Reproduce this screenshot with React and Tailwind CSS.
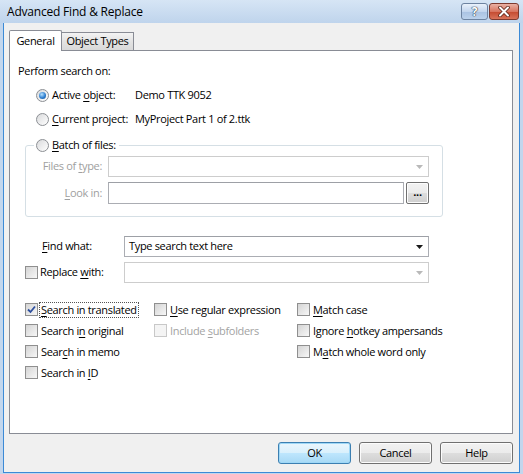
import React from "react";

const UI = "font-['Open_Sans','Noto_Sans',sans-serif] text-[11px] tracking-[-0.33px]";

function K({ children }) {
  return <u className="underline underline-offset-[2px] decoration-1">{children}</u>;
}

function Radio({ checked }) {
  return (
    <span className="w-[13px] h-[13px] shrink-0 rounded-full border border-[#8c8f94] bg-[linear-gradient(135deg,#d9dadc,#ffffff)] flex items-center justify-center">
      {checked && (
        <span className="w-[7px] h-[7px] rounded-full bg-[radial-gradient(circle_at_40%_35%,#b7e2ff,#2f7fd0_55%,#114d8f)]" />
      )}
    </span>
  );
}

function Check({ checked, disabled }) {
  return (
    <span
      className={`w-[13px] h-[13px] shrink-0 border flex items-center justify-center ${
        disabled ? "border-[#c8c8c8] bg-[#f4f4f4]" : "border-[#8f8f8f] bg-[linear-gradient(135deg,#d4d4d4,#f7f7f7)]"
      }`}
    >
      {checked && (
        <svg width="9" height="9" viewBox="0 0 9 9">
          <path d="M1 4.5 L3.5 7 L8 1.5" fill="none" stroke="#2d4f9e" strokeWidth="1.8" />
        </svg>
      )}
    </span>
  );
}

function Arrow({ disabled }) {
  return (
    <svg width="7" height="4" viewBox="0 0 7 4" className="mr-[5px]">
      <path d="M0 0 H7 L3.5 4 Z" fill={disabled ? "#b9b9b9" : "#1a1a1a"} />
    </svg>
  );
}

function Combo({ text, disabled, width }) {
  return (
    <div
      className={`h-[21px] flex items-center justify-between bg-white border ${
        disabled ? "border-[#cdcdcd]" : "border-[#abadb3] border-t-[#9da0a6]"
      }`}
      style={{ width }}
    >
      <span className="pl-[4px] text-black">{text}</span>
      <Arrow disabled={disabled} />
    </div>
  );
}

function CheckItem({ label, checked, disabled, focus }) {
  return (
    <div className="flex items-center h-[21px]">
      <Check checked={checked} disabled={disabled} />
      <span
        className={`ml-[1px] px-[1px] leading-[14px] border ${
          focus ? "border-dotted border-[#555]" : "border-transparent"
        } ${disabled ? "text-[#a3a3a3]" : "text-black"}`}
      >
        {label}
      </span>
    </div>
  );
}

function DlgButton({ children, def }) {
  return (
    <button
      className={`w-[73px] h-[22px] rounded-[3px] border text-black ${
        def
          ? "border-[#3c7fb1] bg-[linear-gradient(#eaf6fd_0%,#d9f0fc_50%,#bee6fd_51%,#a7d9f5_100%)] shadow-[inset_0_0_0_1px_#9fd8f7]"
          : "border-[#707070] bg-[linear-gradient(#f2f2f2_0%,#ebebeb_50%,#dddddd_51%,#cfcfcf_100%)] shadow-[inset_0_0_0_1px_#fcfcfc]"
      }`}
    >
      {children}
    </button>
  );
}

export default function App() {
  return (
    <div className={`w-[523px] h-[474px] flex flex-col px-[3px] pb-[1px] bg-[#c2d6ed] ${UI}`}>
      {/* title bar */}
      <div className="h-[23px] shrink-0 -mx-[3px] flex items-start justify-between bg-[linear-gradient(#d6e5f5,#bfd4ec)] pl-[7px] pr-[4px]">
        <span className="text-[12px] leading-[23px] text-black tracking-[-0.2px]">Advanced Find &amp; Replace</span>
        <div className="flex gap-[1px] pt-[3px]">
          <div className="w-[27px] h-[17px] rounded-[3px] border border-[#6d83a0] bg-[linear-gradient(#e9f1fb,#c3d6ee_50%,#a9c2e2_51%,#bcd2ec)] flex items-center justify-center">
            <span className="text-[12px] font-bold leading-none text-white [text-shadow:0_0_1px_#2c3a4d,0_0_1px_#2c3a4d,0_0_1px_#2c3a4d]">?</span>
          </div>
          <div className="w-[30px] h-[17px] rounded-[3px] border border-[#7d3a2f] bg-[linear-gradient(#eab1a4,#d87560_50%,#c4492f_51%,#d9735a)] flex items-center justify-center">
            <svg width="14" height="11" viewBox="0 0 14 11">
              <path d="M3 1.5 L11 9.5 M11 1.5 L3 9.5" stroke="#5b2418" strokeWidth="3.6" strokeLinecap="round" />
              <path d="M3 1.5 L11 9.5 M11 1.5 L3 9.5" stroke="#ffffff" strokeWidth="2" strokeLinecap="round" />
            </svg>
          </div>
        </div>
      </div>

      {/* dialog body */}
      <div className="flex-1 flex flex-col bg-[#f0f0f0] border-x border-b border-[#3c8ad6] pl-[5px] pr-[6px] pt-[7px]">
        {/* tabs */}
        <div className="flex items-end h-[20px]">
          <div className="relative z-10 w-[53px] h-[21px] -mb-[1px] bg-white border-x border-t border-[#898c95] rounded-t-[2px] flex items-start justify-center pt-[2px] text-black">
            General
          </div>
          <div className="w-[72px] h-[18px] bg-[linear-gradient(#f3f3f3,#e3e3e3_50%,#d9d9d9)] border-r border-t border-[#898c95] flex items-center justify-center text-black">
            Object Types
          </div>
        </div>

        {/* tab panel */}
        <div className="h-[384px] bg-white border border-[#898c95] pt-[12px] text-black">
          <div className="h-[15px] leading-[15px] pl-[8px]">Perform search on:</div>

          <div className="mt-[9px] h-[16px] flex items-center pl-[26px]">
            <Radio checked />
            <span className="ml-[3px] w-[83px]">
              Active <K>o</K>bject:
            </span>
            <span>Demo TTK 9052</span>
          </div>
          <div className="mt-[8px] h-[16px] flex items-center pl-[26px]">
            <Radio />
            <span className="ml-[3px] w-[83px]">
              <K>C</K>urrent project:
            </span>
            <span>MyProject Part 1 of 2.ttk</span>
          </div>

          {/* batch group box */}
          <div className="relative mt-[18px] ml-[15px] w-[418px] border border-[#d5dfe5] rounded-[3px] pt-[10px] pb-[12px]">
            <div className="absolute -top-[9px] left-[8px] h-[16px] flex items-center bg-white px-[2px]">
              <Radio />
              <span className="ml-[3px] pr-[1px]">
                <K>B</K>atch of files:
              </span>
            </div>
            <div className="flex items-center">
              <span className="w-[76px] text-right text-[#a0a0a0]">
                Files of <K>t</K>ype:
              </span>
              <div className="ml-[6px]">
                <Combo disabled width={321} />
              </div>
            </div>
            <div className="flex items-center mt-[5px]">
              <span className="w-[76px] text-right text-[#a0a0a0]">
                <K>L</K>ook in:
              </span>
              <div className="ml-[6px] w-[296px] h-[22px] bg-white border border-[#abadb3] border-t-[#9da0a6]" />
              <div className="ml-[2px] w-[23px] h-[22px] border border-[#707070] rounded-[2px] bg-[linear-gradient(#f2f2f2,#ebebeb_50%,#dddddd_51%,#cfcfcf)] shadow-[inset_0_0_0_1px_#fcfcfc] flex items-center justify-center font-bold leading-none pb-[3px]">
                ...
              </div>
            </div>
          </div>

          {/* find / replace */}
          <div className="mt-[19px] flex items-center h-[21px] pl-[32px]">
            <span className="w-[82px]">
              <K>F</K>ind what:
            </span>
            <Combo text="Type search text here" width={305} />
          </div>
          <div className="mt-[5px] flex items-center h-[21px] pl-[15px]">
            <div className="w-[99px] flex items-center">
              <Check />
              <span className="ml-[2px]">
                Replace <K>w</K>ith:
              </span>
            </div>
            <Combo disabled width={305} />
          </div>

          {/* options */}
          <div className="mt-[16px] ml-[15px] grid grid-cols-[129px_143px_1fr]">
            <CheckItem
              checked
              focus
              label={
                <>
                  <K>S</K>earch in translated
                </>
              }
            />
            <CheckItem
              label={
                <>
                  <K>U</K>se regular expression
                </>
              }
            />
            <CheckItem
              label={
                <>
                  <K>M</K>atch case
                </>
              }
            />
            <CheckItem
              label={
                <>
                  Search i<K>n</K> original
                </>
              }
            />
            <CheckItem
              disabled
              label={
                <>
                  Include <K>s</K>ubfolders
                </>
              }
            />
            <CheckItem
              label={
                <>
                  Ignore <K>h</K>otkey ampersands
                </>
              }
            />
            <CheckItem
              label={
                <>
                  Sear<K>c</K>h in memo
                </>
              }
            />
            <div />
            <CheckItem
              label={
                <>
                  M<K>a</K>tch whole word only
                </>
              }
            />
            <CheckItem
              label={
                <>
                  Search in <K>I</K>D
                </>
              }
            />
          </div>
        </div>

        {/* buttons */}
        <div className="mt-[8px] flex justify-end gap-[8px]">
          <DlgButton def>OK</DlgButton>
          <DlgButton>Cancel</DlgButton>
          <DlgButton>Help</DlgButton>
        </div>
      </div>
    </div>
  );
}
